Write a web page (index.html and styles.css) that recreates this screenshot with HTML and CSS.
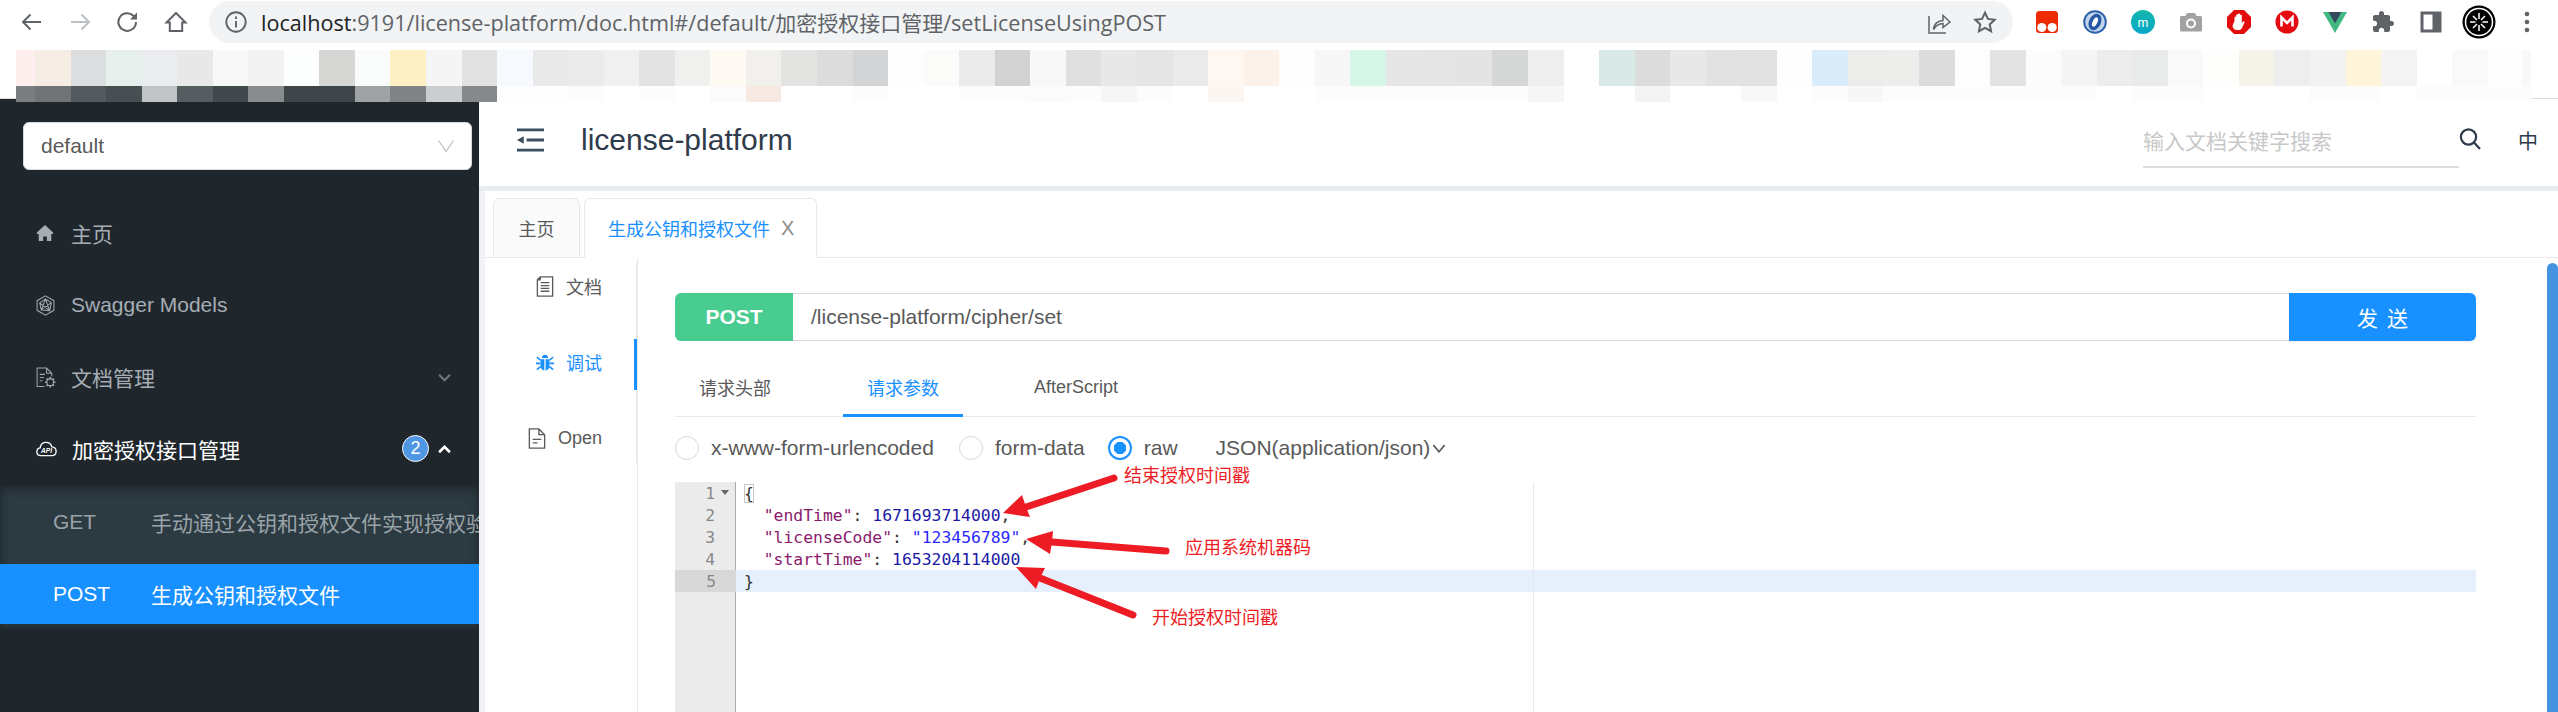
FILE: index.html
```html
<!DOCTYPE html>
<html lang="zh-CN">
<head>
<meta charset="utf-8">
<title>license-platform</title>
<link rel="stylesheet" href="styles.css">
</head>
<body>
<div class="browser">
  <div class="toolbar">
    <div class="navbtn"><svg viewBox="0 0 24 24" class="ico24 stroke-g"><path d="M21 12H3M10.5 4.5 3 12l7.500 7.500"/></svg></div>
    <div class="navbtn"><svg viewBox="0 0 24 24" class="ico24 stroke-l"><path d="M3 12h18M13.500 4.500 21 12l-7.500 7.500"/></svg></div>
    <div class="navbtn"><svg viewBox="0 0 24 24" class="ico24 stroke-g"><path d="M20 12a8.800 8.800 0 1 1-2.600-6.200L20 8.400"/><path class="fill-g" d="M21 2.500v7h-7z"/></svg></div>
    <div class="navbtn"><svg viewBox="0 0 24 24" class="ico24 stroke-g"><path d="M12 3 2.500 12.500h3.300V21h12.400v-8.500h3.300z"/></svg></div>
    <div class="address">
      <svg viewBox="0 0 24 24" class="ico24 info"><circle cx="12" cy="12" r="9.700"/><path d="M12 11v6.500M12 6.500v2.500"/></svg>
      <div class="url"><span class="host">localhost</span>:9191/license-platform/doc.html#/default/<span class="url-cjk">加密授权接口管理</span>/setLicenseUsingPOST</div>
      <svg viewBox="0 0 24 24" class="ico24 share"><path d="M2 6v17h17M6.500 19.500c.5-5.500 4-8.500 9.500-9V5.500l7 6.500-7 5.500v-4c-4 .2-7 1.800-9.500 6z"/></svg>
      <svg viewBox="0 0 24 24" class="ico24 star"><path d="m12 2.600 2.900 6.300 6.900.8-5.100 4.700 1.400 6.800-6.100-3.400-6.100 3.400 1.400-6.800-5.100-4.700 6.900-.8z"/></svg>
    </div>
    <div class="ext-list">
      <div class="ext"><svg viewBox="0 0 24 24" class="ico24"><rect x="1" y="1" width="22" height="22" rx="3.500" fill="#ee2a00"/><circle cx="6.800" cy="17.500" r="4.600" fill="#fff"/><circle cx="17.200" cy="17.500" r="4.600" fill="#fff"/></svg></div>
      <div class="ext"><svg viewBox="0 0 24 24" class="ico24"><circle cx="12" cy="12" r="11.800" fill="#2d62ad"/><circle cx="12" cy="12" r="9.800" fill="#c3d5ec"/><ellipse cx="12" cy="12" rx="6" ry="8.500" transform="rotate(25 12 12)" fill="#2457a4"/><ellipse cx="12" cy="12" rx="2.400" ry="5" transform="rotate(25 12 12)" fill="#fff"/></svg></div>
      <div class="ext"><svg viewBox="0 0 24 24" class="ico24"><defs><linearGradient id="tl" x1="0" y1="0" x2="0" y2="1"><stop offset="0" stop-color="#14b8ac"/><stop offset="1" stop-color="#08a7c9"/></linearGradient></defs><circle cx="12" cy="12" r="12" fill="url(#tl)"/><text x="12" y="16.500" text-anchor="middle" class="ext-m">m</text></svg></div>
      <div class="ext"><svg viewBox="0 0 24 24" class="ico24"><path d="M1 7.500c0-1 .8-1.500 1.500-1.500H6.500l1.500-3h8l1.500 3h4c.7 0 1.500.5 1.500 1.500V20c0 1-.8 1.500-1.500 1.500h-19C1.800 21.500 1 21 1 20z" fill="#a2a2a2"/><circle cx="12" cy="13.500" r="5" fill="#fff"/><circle cx="12" cy="13.500" r="3" fill="#a2a2a2"/></svg></div>
      <div class="ext"><svg viewBox="0 0 24 24" class="ico24"><path d="M7 0h10l7 7v10l-7 7H7l-7-7V7z" fill="#e30c0c"/><path d="M7.500 11V7.500c0-1.300 1.700-1.300 1.700 0V5.300c0-1.300 1.800-1.300 1.800 0V4.500c0-1.300 2-1.300 2 0v1c0-1.200 1.800-1.200 1.800 0v7.800l.9-1.400c.7-1.200 2.300-.4 1.700.8l-2.300 5c-.8 1.600-1.900 2.300-3.800 2.300h-1.500c-2.300 0-4.300-1.900-4.300-4.300z" fill="#fff"/></svg></div>
      <div class="ext"><svg viewBox="0 0 24 24" class="ico24"><circle cx="12" cy="12" r="11.500" fill="#e50a12"/><path d="M6.500 16.500V7.500l5.500 5.500 5.500-5.500v9" fill="none" stroke="#fff" stroke-width="2.600"/></svg></div>
      <div class="ext"><svg viewBox="0 0 24 24" class="ico24"><path d="M0 2h24L12 23z" fill="#42b883"/><path d="M5.500 2h13L12 13.500z" fill="#35495e"/></svg></div>
      <div class="ext"><svg viewBox="0 0 24 24" class="ico24"><path fill="#5f6368" d="M20.500 11H19V7c0-1.100-.9-2-2-2h-4V3.500C13 2.120 11.880 1 10.500 1S8 2.120 8 3.500V5H4c-1.100 0-1.990.9-1.990 2v3.800H3.500c1.490 0 2.700 1.210 2.700 2.700s-1.210 2.700-2.700 2.700H2V20c0 1.100.9 2 2 2h3.800v-1.500c0-1.490 1.210-2.700 2.700-2.700 1.490 0 2.700 1.210 2.700 2.700V22H17c1.100 0 2-.9 2-2v-4h1.500c1.380 0 2.500-1.120 2.500-2.500S21.880 11 20.500 11z"/></svg></div>
      <div class="ext"><svg viewBox="0 0 24 24" class="ico24"><path d="M1.500 1.500h21v21h-21z" fill="#5f6368"/><path d="M4.500 4.500h9v15h-9z" fill="#fff"/></svg></div>
      <div class="ext"><svg viewBox="0 0 34 34" class="ico34"><circle cx="17" cy="17" r="16.500" fill="#000"/><circle cx="17" cy="17" r="13.500" fill="none" stroke="#fff" stroke-width="1.500"/><path d="M17 8v6M17 20v6M8 17h5.500M20.500 17H26M11 11l4 4M19 19l4 4M23 11l-4 4M15 19l-4 4" stroke="#fff" stroke-width="1.500"/></svg></div>
      <div class="ext"><svg viewBox="0 0 24 24" class="ico24"><circle cx="12" cy="4" r="2.300" fill="#5f6368"/><circle cx="12" cy="12" r="2.300" fill="#5f6368"/><circle cx="12" cy="20" r="2.300" fill="#5f6368"/></svg></div>
    </div>
  </div>
  <div class="bookmarks"></div>
  <div class="app">
    <aside class="sidebar">
      <div class="select"><span>default</span><svg viewBox="0 0 16 12" class="sel-chev"><path d="M.5.500 8 11.500 15.500.500"/></svg></div>
      <nav class="menu">
        <div class="mi"><svg viewBox="0 0 20 20" class="mi-ico"><path fill="#a8adb1" d="M10 1 1 9.500v1.500h2v8h5v-5h4v5h5v-8h2V9.500z"/></svg><span>主页</span></div>
        <div class="mi"><svg viewBox="0 0 20 20" class="mi-ico line"><path d="M10 .8 18 5.400v9.200L10 19.200 2 14.600V5.400zM10 3.800 15.500 7.300 14 15 6 14.200 4.500 7.500zM4.500 7.500 14 15M15.500 7.300 6 14.200M10 3.800 6 14.200M10 3.800 14 15"/></svg><span>Swagger Models</span></div>
        <div class="mi"><svg viewBox="0 0 20 20" class="mi-ico line"><path d="M9 18.500H2V1h9l5 5v3M11 1v5h5M4.500 7h5M4.500 10h4M4.500 13h2.500"/><circle cx="14.500" cy="14.500" r="3.200"/><path d="M14.500 9.500v2M14.500 17.500v2M9.500 14.500h2M17.500 14.500h2M11 11l1.300 1.300M16.700 16.700l1.300 1.300M18 11l-1.300 1.300M12.300 16.700 11 18" stroke-width="1.600"/></svg><span>文档管理</span><svg viewBox="0 0 12 8" class="mi-chev down"><path d="M1 1.500 6 6.500l5-5"/></svg></div>
        <div class="mi open"><svg viewBox="0 0 24 20" class="mi-ico cloud"><path d="M6 17.500C3 17.500 1 15.500 1 13c0-2.300 1.500-4 3.700-4.300C5.300 5 8 2.500 11.500 2.500c3.200 0 5.800 2 6.500 5 3 .2 5 2.300 5 5 0 3-2.200 5-5 5z"/><text x="12" y="14" text-anchor="middle" class="api">API</text></svg><span>加密授权接口管理</span><em class="badge">2</em><svg viewBox="0 0 12 8" class="mi-chev up"><path d="M1 6.500 6 1.500l5 5"/></svg></div>
        <div class="sub">
          <div class="si get"><b>GET</b><span>手动通过公钥和授权文件实现授权验证</span></div>
          <div class="si on"><b>POST</b><span>生成公钥和授权文件</span></div>
        </div>
      </nav>
    </aside>
    <main class="main">
      <header class="head">
        <svg viewBox="0 0 28 24" class="burger"><path d="M0 1.500h28M10 12h18M0 22.500h28"/><path class="burger-a" d="M7 8v8l-7-4z"/></svg>
        <h1>license-platform</h1>
        <div class="search"><span>输入文档关键字搜索</span></div>
        <svg viewBox="0 0 22 22" class="search-ico"><circle cx="9.500" cy="9" r="7.600"/><path d="m15 14.500 6 6.500"/></svg>
        <div class="lang">中</div>
      </header>
      <section class="content">
        <div class="tabs">
          <div class="tab">主页</div>
          <div class="tab active"><span>生成公钥和授权文件</span><i>X</i></div>
        </div>
        <div class="body">
          <div class="side-col">
            <div class="vnav">
              <div class="vi"><svg viewBox="0 0 18 22" class="vi-ico line-g"><path d="M4 1h13v20H1V4zM4 1v3H1M4.500 7h9M4.500 10h9M4.500 13h9M4.500 16h9"/></svg><span>文档</span></div>
              <div class="vi on"><svg viewBox="0 0 20 20" class="vi-ico"><path fill="#1890ff" d="M6.500 5c0-2 1.500-3.500 3.500-3.500S13.500 3 13.500 5zM5 6.500h4.300V19C6.800 18.700 5 16.800 5 14zM15 6.500h-4.300V19c2.500-.3 4.300-2.200 4.300-5z"/><path d="M1 4l4 3.500M19 4l-4 3.500M0 11h5M20 11h-5M1 18l4-3.500M19 18l-4-3.500" stroke="#1890ff" stroke-width="1.800"/></svg><span>调试</span></div>
              <div class="vi"><svg viewBox="0 0 18 22" class="vi-ico line-g"><path d="M1 1h10l6 6v14H1zM11 1v6h6M4.500 12h9M4.500 15.500h5"/></svg><span>Open</span></div>
            </div>
          </div>
          <div class="pane">
            <div class="reqbar">
              <div class="method">POST</div>
              <div class="path">/license-platform/cipher/set</div>
              <div class="send">发 送</div>
            </div>
            <div class="subtabs">
              <div class="st">请求头部</div>
              <div class="st active">请求参数</div>
              <div class="st">AfterScript</div>
            </div>
            <div class="radios">
              <label class="radio"><i></i><span>x-www-form-urlencoded</span></label>
              <label class="radio"><i></i><span>form-data</span></label>
              <label class="radio checked"><i></i><span>raw</span></label>
              <div class="ctype">JSON(application/json)<svg viewBox="0 0 12 8" class="ct-chev"><path d="M1 1l5 6 5-6"/></svg></div>
            </div>
            <div class="editor">
              <div class="gutter">
                <div class="gl">1<i class="fold"></i></div>
                <div class="gl">2</div>
                <div class="gl">3</div>
                <div class="gl">4</div>
                <div class="gl cur">5</div>
              </div>
              <div class="code">
                <div class="cl"><span class="match">{</span></div>
                <div class="cl">  <span class="k">"endTime"</span>: <span class="n">1671693714000</span>,</div>
                <div class="cl">  <span class="k">"licenseCode"</span>: <span class="s">"123456789"</span>,</div>
                <div class="cl">  <span class="k">"startTime"</span>: <span class="n">1653204114000</span></div>
                <div class="cl cur">}</div>
                <div class="margin"></div>
              </div>
            </div>
          </div>
        </div>
      </section>
    </main>
  </div>
</div>

<div class="mosaic">
  <div class="mrow tall">
    <span style="background:#feeeee"></span><span style="background:#f5ece4"></span><span style="background:#dcdddf"></span><span style="background:#e6efec"></span><span style="background:#ebecf0"></span><span style="background:#e8e8e8"></span><span style="background:#f8f8f8"></span><span style="background:#f3f3f3"></span><span style="background:#fdfefe"></span><span style="background:#d6d6d4"></span><span style="background:#fafcfb"></span><span style="background:#fdf0c4"></span><span style="background:#f5f5f5"></span><span style="background:#e2e2e2"></span><span style="background:#f6f9fd"></span><span style="background:#e9e9e9"></span><span style="background:#ebebeb"></span><span style="background:#f0f0f0"></span><span style="background:#e3e3e3"></span><span style="background:#f0f0ef"></span><span style="background:#fef9f2"></span><span style="background:#f1f0ec"></span><span style="background:#e3e4e2"></span><span style="background:#dcdcdc"></span>
    <span style="background:#d3d4d6"></span><span style="background:#fdfdfd"></span><span style="background:#fbfbf9"></span><span style="background:#ebebeb"></span><span style="background:#d2d2d2"></span><span style="background:#f8f8f8"></span><span style="background:#e0e0e0"></span><span style="background:#e9e8e8"></span><span style="background:#e5e5e5"></span><span style="background:#eaeaea"></span><span style="background:#fef7f2"></span><span style="background:#fdf2ea"></span><span style="background:#fdfdfd"></span><span style="background:#f7f7f7"></span><span style="background:#d6f6e8"></span><span style="background:#e6e6e6"></span><span style="background:#e5e5e5"></span><span style="background:#e4e4e4"></span><span style="background:#d6d8d7"></span><span style="background:#eeeeee"></span><span style="background:#ffffff"></span><span style="background:#d9e9e8"></span><span style="background:#dcdcdc"></span><span style="background:#e8e8e8"></span>
    <span style="background:#e2e2e2"></span><span style="background:#e1e1e1"></span><span style="background:#fefefe"></span><span style="background:#daebf9"></span><span style="background:#ececea"></span><span style="background:#ededeb"></span><span style="background:#dcdcdc"></span><span style="background:#fdfdfd"></span><span style="background:#e3e3e3"></span><span style="background:#fcfcfc"></span><span style="background:#f6f5f6"></span><span style="background:#ececec"></span><span style="background:#e9eaea"></span><span style="background:#f9f9f9"></span><span style="background:#fefefc"></span><span style="background:#f5f2ea"></span><span style="background:#eeeeee"></span><span style="background:#f2f2f3"></span><span style="background:#fef5da"></span><span style="background:#f4f4f4"></span><span style="background:#ffffff"></span><span style="background:#f9f9f9"></span><span style="background:#fdfdfd"></span><span style="background:#f8f8f8"></span>
  </div>
  <div class="mrow short">
    <span style="background:#7b7e81"></span><span style="background:#707477"></span><span style="background:#53595c"></span><span style="background:#484f52"></span><span style="background:#c1c4c4"></span><span style="background:#565d60"></span><span style="background:#41484b"></span><span style="background:#888c8f"></span><span style="background:#3f4649"></span><span style="background:#3f4649"></span><span style="background:#a0a3a4"></span><span style="background:#7f8386"></span><span style="background:#cccdce"></span><span style="background:#85898c"></span><span style="background:#fdfdfd"></span><span style="background:#fdfdfd"></span><span style="background:#fcfcfc"></span><span style="background:#ffffff"></span><span style="background:#fcfcfc"></span><span style="background:#ffffff"></span><span style="background:#fbfbfb"></span><span style="background:#f6e9e2"></span><span style="background:#ffffff"></span><span style="background:#ffffff"></span>
    <span style="background:#fcfcfc"></span><span style="background:#ffffff"></span><span style="background:#ffffff"></span><span style="background:#fcfcfc"></span><span style="background:#fcfcfc"></span><span style="background:#fbfbfb"></span><span style="background:#fcfcfc"></span><span style="background:#f6f6f6"></span><span style="background:#fcfcfc"></span><span style="background:#ffffff"></span><span style="background:#fbf6f2"></span><span style="background:#ffffff"></span><span style="background:#ffffff"></span><span style="background:#fcfcfc"></span><span style="background:#fcfcfc"></span><span style="background:#fcfcfc"></span><span style="background:#fcfcfc"></span><span style="background:#fcfcfc"></span><span style="background:#fcfcfc"></span><span style="background:#f6f6f6"></span><span style="background:#ffffff"></span><span style="background:#ffffff"></span><span style="background:#f4f4f4"></span><span style="background:#ffffff"></span>
    <span style="background:#ffffff"></span><span style="background:#f8f8f8"></span><span style="background:#ffffff"></span><span style="background:#fcfcfc"></span><span style="background:#f7f7f7"></span><span style="background:#fcfcfc"></span><span style="background:#fcfcfc"></span><span style="background:#fcfcfc"></span><span style="background:#fcfcfc"></span><span style="background:#fcfcfc"></span><span style="background:#fcfcfc"></span><span style="background:#ffffff"></span><span style="background:#fcfcfc"></span><span style="background:#fcfcfc"></span><span style="background:#ffffff"></span><span style="background:#ffffff"></span><span style="background:#ffffff"></span><span style="background:#fcfcfc"></span><span style="background:#fcfcfc"></span><span style="background:#ffffff"></span><span style="background:#fcfcfc"></span><span style="background:#fcfcfc"></span><span style="background:#fcfcfc"></span><span style="background:#fcfcfc"></span>
  </div>
</div>

<div class="scrollbar"></div>

<svg class="arrows" viewBox="0 0 2558 712">
  <path class="arrow-tail" d="M1114 478 1026 507"/>
  <path class="arrow-head" d="M1003 513 1022 495 1026 507 1030 517z"/>
  <path class="arrow-tail" d="M1166 551 1052 542"/>
  <path class="arrow-head" d="M1026 539 1053 531 1052 542 1050 554z"/>
  <path class="arrow-tail" d="M1133 615 1040 578"/>
  <path class="arrow-head" d="M1016 567 1045 568 1040 578 1036 589z"/>
</svg>
<div class="note n1">结束授权时间戳</div>
<div class="note n2">应用系统机器码</div>
<div class="note n3">开始授权时间戳</div>
</body>
</html>
```
FILE: styles.css
```css
* { box-sizing: border-box; }
html, body { margin: 0; padding: 0; }
body {
  width: 2558px;
  height: 712px;
  overflow: hidden;
  position: relative;
  background: #fff;
  font-family: "Liberation Sans", "Noto Sans CJK SC", sans-serif;
  font-size: 21px;
  color: #595959;
}
svg { display: block; flex: none; }
.ico24 { width: 24px; height: 24px; }
.ico34 { width: 34px; height: 34px; }
.stroke-g, .stroke-l, .info, .share, .star { fill: none; stroke-width: 2; }
.stroke-g, .info, .share, .star { stroke: #5f6368; }
.stroke-l { stroke: #bdc1c6; }
.fill-g { fill: #5f6368; stroke: none; }

/* browser chrome */
.browser { height: 712px; display: flex; flex-direction: column; }
.toolbar { height: 50px; flex: none; display: flex; align-items: flex-start; padding-left: 7.5px; }
.navbtn { width: 48px; height: 44px; display: flex; align-items: center; justify-content: center; }
.address {
  width: 1804px; height: 42px; margin: 1px 0 0 9.5px;
  background: #f1f3f4; border-radius: 21px;
  display: flex; align-items: center; padding: 0 13px 0 15px;
}
.info { stroke-width: 1.9; }
.url { flex: 1; margin-left: 13px; font-family: "Open Sans", "Noto Sans CJK SC", sans-serif; font-size: 21.6px; color: #5f6368; white-space: nowrap; }
.url-cjk { font-size: 21px; }
.host { color: #202124; }
.share { margin-right: 22px; stroke-width: 1.5; }
.star { margin-right: 3px; }
.ext-list { display: flex; margin-left: 10px; }
.ext { width: 48px; height: 44px; display: flex; align-items: center; justify-content: center; }
.ext-m { font-size: 13px; fill: #fff; font-family: "Liberation Sans", sans-serif; }
.bookmarks { height: 49px; flex: none; border-bottom: 1px solid #dcdcdc; }

.mosaic { position: absolute; left: 16px; top: 50px; }
.mrow { display: grid; grid-template-columns: 19px repeat(70, 35.55px) 8px; }
.mrow.tall { height: 36px; }
.mrow.short { height: 16px; }

/* app */
.app { flex: 1; display: flex; min-height: 0; }
.sidebar { width: 479px; flex: none; background: #1f272d; overflow: hidden; }
.select {
  margin: 23px 7px 0 23px; height: 48px; background: #fff; border-radius: 6px;
  display: flex; align-items: center; justify-content: space-between; padding: 0 18px 0 17px;
  border: 1px solid #d9d9d9;
}
.sel-chev { width: 16px; height: 12px; fill: none; stroke: #bfbfbf; stroke-width: 1.200; margin-right: -1px; }
.menu { margin-top: 27px; }
.mi { height: 72px; display: flex; align-items: center; padding-left: 36px; color: #a6adb4; position: relative; white-space: nowrap; }
.mi span { margin-left: 17px; }
.mi-ico { width: 18px; height: 18px; }
.mi-ico.line { fill: none; stroke: #a0a5a9; stroke-width: 1; width: 21px; height: 21px; margin-left: -1px; margin-right: -2px; }
.mi-ico.cloud { width: 21px; height: 18px; fill: none; stroke: #fff; stroke-width: 1.500; margin-right: -2px; }
.api { font-size: 7.500px; font-style: italic; font-weight: bold; fill: #fff; stroke: none; font-family: "Liberation Sans", sans-serif; }
.mi.open { color: #fff; }
.mi-chev { position: absolute; left: 438px; top: 32px; width: 13px; height: 9px; fill: none; stroke-width: 2; }
.mi-chev.down { stroke: #6f767b; }
.mi-chev.up { stroke: #fff; stroke-width: 2.400; }
.badge {
  position: absolute; left: 402px; top: 22px; width: 27px; height: 27px; border-radius: 50%;
  background: #4f97e5; border: 1px solid #fff; color: #fff; font-style: normal; font-size: 18px;
  display: flex; align-items: center; justify-content: center;
}
.sub { background: #2c3a42; box-shadow: inset 0 4px 10px #1f272d, inset 0 -5px 5px -2px #1f272d; padding-bottom: 6px; }
.si { display: flex; align-items: center; padding-left: 53px; white-space: nowrap; }
.si b { font-weight: normal; width: 98px; flex: none; }
.si.get { height: 79px; padding-bottom: 6px; color: #9aa3a8; }
.si.on { height: 60px; background: #1890ff; color: #fff; }

.main { flex: 1; min-width: 0; display: flex; flex-direction: column; }
.head { height: 92px; flex: none; border-bottom: 5px solid #e9ecf0; display: flex; align-items: center; padding: 0 0 5px 38px; color: #2f3b4b; position: relative; }
.burger { width: 27px; height: 24px; fill: none; stroke: #3d4f5f; stroke-width: 3; }
.burger-a { fill: #3d4f5f; stroke: none; }
.head h1 { margin: 0 0 0 37px; font-size: 30px; font-weight: normal; color: #2f3b4b; flex: 1; }
.search { width: 316px; height: 50px; border-bottom: 2px solid #dcdcdc; margin-top: 6px; color: #c8c8c8; line-height: 48px; }
.search-ico { width: 22px; height: 22px; fill: none; stroke: #2f3b4b; stroke-width: 2.200; margin: -2px 0 0 0; }
.lang { margin-left: 37px; width: 40px; font-size: 20px; color: #2f3b4b; }

.content { flex: 1; min-height: 0; margin-left: 6px; background: #fff; display: flex; flex-direction: column; box-shadow: -6px 0 0 #f0f2f5; }
.tabs { margin-top: 7px; height: 60px; flex: none; display: flex; gap: 4px; padding-left: 8px; border-bottom: 1px solid #e8e8e8; font-size: 18px; }
.tab { height: 60px; width: 87px; background: #fafafa; border: 1px solid #e8e8e8; border-radius: 6px 6px 0 0; display: flex; align-items: center; justify-content: center; }
.tab.active { width: 233px; background: #fff; border-bottom-color: #fff; color: #1890ff; justify-content: flex-start; padding-left: 23px; }
.tab i { font-style: normal; font-size: 20px; color: #8c8c8c; margin-left: 11px; }
.body { flex: 1; min-height: 0; display: flex; }
.side-col { width: 153px; flex: none; border-right: 1px solid #e8e8e8; font-size: 18px; padding-top: 5px; }
.vnav { height: 200px; margin-right: -1px; border-right: 2px solid #e8e8e8; }
.vi { height: 51px; margin: 0 -1px 25px 0; border-right: 3px solid transparent; padding: 0 32px 5px 0; display: flex; align-items: center; justify-content: flex-end; gap: 12px; }
.vi.on { border-right-color: #1890ff; color: #1890ff; }
.vi-ico { width: 18px; height: 21px; }
.line-g { fill: none; stroke: #5a5a5a; stroke-width: 1.400; }

.pane { flex: 1; min-width: 0; padding: 35px 82px 0 37px; display: flex; flex-direction: column; }
.reqbar { height: 48px; flex: none; display: flex; }
.method { width: 118px; background: #49cc90; color: #fff; font-weight: bold; border-radius: 6px 0 0 6px; display: flex; align-items: center; justify-content: center; }
.path { flex: 1; border: solid #d9d9d9; border-width: 1px 0; padding-left: 18px; line-height: 46px; }
.send { width: 187px; background: #1890ff; color: #fff; border-radius: 0 6px 6px 0; display: flex; align-items: center; justify-content: center; word-spacing: 3px; box-shadow: 0 2px 3px rgba(0,0,0,.05); }
.subtabs { margin-top: 17px; height: 59px; flex: none; display: flex; gap: 48px; border-bottom: 1px solid #e8e8e8; font-size: 18px; }
.st { height: 59px; padding: 2px 24px 3px; display: flex; align-items: center; }
.st:last-child { margin-left: -1px; }
.st.active { color: #1890ff; border-bottom: 3px solid #1890ff; padding-bottom: 0; }
.radios { margin: 13px 0 16px; height: 36px; flex: none; display: flex; align-items: center; }
.radio { display: flex; align-items: center; gap: 12px; margin-right: 25px; }
.radio:nth-child(2) { margin-right: 23px; }
.radio i { width: 24px; height: 24px; border-radius: 50%; border: 1px solid #d9d9d9; flex: none; }
.radio.checked i { border: 2px solid #1890ff; background: radial-gradient(circle, #1890ff 0 6px, #fff 6.500px); }
.radio.checked { margin-right: 38px; }
.ctype { display: flex; align-items: center; gap: 2px; }
.ct-chev { width: 14px; height: 9px; fill: none; stroke: #595959; stroke-width: 1.400; }

.editor { flex: 1; min-height: 0; display: flex; font-family: "DejaVu Sans Mono", "Liberation Mono", monospace; font-size: 16.400px; line-height: 24px; }
.gutter { width: 61px; flex: none; background: #ebebeb; border-right: 1px solid #aaa; color: #888; text-align: right; }
.gl { height: 22px; padding-right: 20px; position: relative; }
.gl.cur { background: #d8d8d8; margin-right: -1px; }
.fold { position: absolute; left: 46px; top: 8px; border: 4px solid transparent; border-top: 5px solid #666; border-bottom: 0; }
.code { flex: 1; min-width: 0; position: relative; color: #333; }
.cl { height: 22px; padding-left: 8px; white-space: pre; }
.cl.cur { background: #e6f0fc; }
.k { color: #8a1a6c; }
.n { color: #1a1aa6; }
.s { color: #2a2aff; }
.match { outline: 1px solid #c8c8c8; outline-offset: -1px; }
.margin { position: absolute; left: 797px; top: 0; bottom: 0; width: 1px; background: #e8e8e8; }

.scrollbar { position: absolute; left: 2547px; top: 263px; bottom: 0; width: 11px; background: #4593e0; border-radius: 6px 6px 0 0; }
.arrows { position: absolute; left: 0; top: 0; width: 2558px; height: 712px; pointer-events: none; }
.arrow-tail { fill: none; stroke: #ed1c24; stroke-width: 7; stroke-linecap: round; }
.arrow-head { fill: #ed1c24; }
.note { position: absolute; font-size: 18px; color: #ed1c24; white-space: nowrap; line-height: 24px; }
.n1 { left: 1124px; top: 464px; }
.n2 { left: 1185px; top: 536px; }
.n3 { left: 1152px; top: 606px; }
```
